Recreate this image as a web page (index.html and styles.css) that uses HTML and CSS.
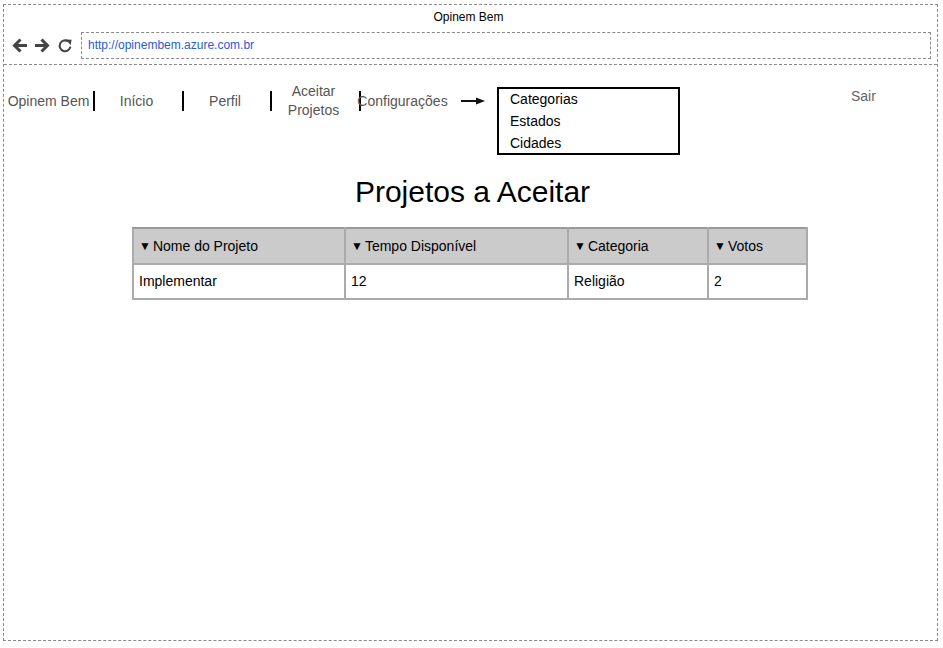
FILE: index.html
```html
<!DOCTYPE html>
<html lang="pt">
<head>
<meta charset="utf-8">
<title>Opinem Bem</title>
<link rel="stylesheet" href="styles.css">
</head>
<body>
<div class="frame">
  <header class="browser">
    <div class="browser-title">Opinem Bem</div>
    <div class="toolbar">
      <svg class="icon" width="17" height="17" viewBox="0 0 17 17"><path d="M16 8.5H3.5M9.5 2.5L3.5 8.5l6 6" fill="none" stroke="#444" stroke-width="3"/></svg>
      <svg class="icon" width="17" height="17" viewBox="0 0 17 17"><path d="M1 8.5h12.5M7.5 2.5l6 6-6 6" fill="none" stroke="#444" stroke-width="3"/></svg>
      <svg class="icon" width="16" height="16" viewBox="0 0 16 16"><path d="M11.2 3.4A5.4 5.4 0 1 0 13.4 8.6" fill="none" stroke="#444" stroke-width="2"/><path d="M9 1.6L14.6 1.8L13.6 7.2Z" fill="#444"/></svg>
      <div class="url">http://opinembem.azure.com.br</div>
    </div>
  </header>

  <nav class="nav">
    <div class="nav-item first">Opinem Bem</div>
    <span class="sep"></span>
    <div class="nav-item w87">Início</div>
    <span class="sep"></span>
    <div class="nav-item w86">Perfil</div>
    <span class="sep"></span>
    <div class="nav-item w87">Aceitar<br>Projetos</div>
    <span class="sep"></span>
    <div class="nav-item w87">Configurações</div>
    <svg class="nav-arrow" width="24" height="10" viewBox="0 0 24 10"><path d="M0 5H18" stroke="#111" stroke-width="2"/><path d="M15 1.5L24 5L15 8.5Z" fill="#111"/></svg>
    <ul class="submenu">
      <li>Categorias</li>
      <li>Estados</li>
      <li>Cidades</li>
    </ul>
    <div class="nav-item logout">Sair</div>
  </nav>

  <main class="content">
    <h1 class="page-title">Projetos a Aceitar</h1>
    <table class="projects">
      <colgroup>
        <col class="c1"><col class="c2"><col class="c3"><col class="c4">
      </colgroup>
      <thead>
        <tr>
          <th><span class="caret">▼</span>Nome do Projeto</th>
          <th><span class="caret">▼</span>Tempo Disponível</th>
          <th><span class="caret">▼</span>Categoria</th>
          <th><span class="caret">▼</span>Votos</th>
        </tr>
      </thead>
      <tbody>
        <tr>
          <td>Implementar</td>
          <td>12</td>
          <td>Religião</td>
          <td>2</td>
        </tr>
      </tbody>
    </table>
  </main>
</div>
</body>
</html>
```

FILE: styles.css
```css
* { box-sizing: border-box; }

html, body {
  margin: 0;
  padding: 0;
  background: #fff;
}

body {
  font-family: "Liberation Sans", Arial, sans-serif;
  color: #000;
}

.frame {
  margin: 4px 0 0 3px;
  width: 935px;
  height: 637px;
  border: 1px dashed #8a8a8a;
}

.browser {
  border-bottom: 1px dashed #8a8a8a;
  padding: 5px 6px 5px 0;
}

.browser-title {
  font-size: 12px;
  line-height: 14px;
  text-align: center;
  padding-left: 2px;
}

.toolbar {
  margin-top: 8px;
  display: flex;
  align-items: center;
  padding-left: 7px;
  gap: 6px;
}

.icon { display: block; flex: none; }

.url {
  margin-left: 2px;
  flex: 1;
  height: 27px;
  border: 1px dashed #8a8a8a;
  font-size: 12px;
  line-height: 25px;
  padding-left: 6px;
  color: #2a5bd7;
}

.nav {
  display: flex;
  align-items: flex-start;
  margin-top: 17px;
  font-size: 14px;
  color: #555;
}

.nav-item {
  height: 38px;
  line-height: 19px;
  display: flex;
  align-items: center;
  justify-content: center;
  text-align: center;
  white-space: nowrap;
  flex: none;
}

.nav-item.first { width: 89px; }
.nav-item.w87 { width: 87px; padding-right: 4px; }
.nav-item.w86 { width: 86px; padding-right: 4px; }

.sep {
  flex: none;
  width: 2px;
  height: 20px;
  margin-top: 9px;
  background: #000;
}

.nav-arrow {
  flex: none;
  display: block;
  margin: 14px 0 0 13px;
}

.submenu {
  list-style: none;
  margin: 5px 0 0 12px;
  padding: 0 0 0 11px;
  width: 183px;
  height: 68px;
  border: 2px solid #000;
  color: #000;
  font-size: 14px;
  line-height: 22px;
  flex: none;
}

.submenu li { position: relative; top: -1px; }

.nav-item.logout {
  height: 19px;
  margin: 5px 0 0 171px;
  padding-right: 0;
  color: #666;
}

.page-title {
  margin: 19px 0 0;
  padding-left: 4px;
  font-size: 30px;
  font-weight: normal;
  line-height: 36px;
  text-align: center;
}

.projects {
  margin: 17px 0 0 128px;
  width: 674px;
  table-layout: fixed;
  border-collapse: collapse;
  font-size: 14px;
}

.c1 { width: 212px; }
.c2 { width: 223px; }
.c3 { width: 140px; }
.c4 { width: 99px; }

.projects th,
.projects td {
  border: 2px solid #ababab;
  text-align: left;
  padding: 0 0 0 5px;
  white-space: nowrap;
}

.projects th {
  height: 36px;
  background: #cbcbcb;
  font-weight: normal;
  padding-bottom: 1px;
}

.projects thead tr th { border-top-color: #9a9a9a; }

.projects td {
  height: 35px;
  background: #fff;
  padding-bottom: 1px;
}

.caret {
  font-size: 12px;
  margin-right: 2px;
  position: relative;
  top: -1px;
}
```
